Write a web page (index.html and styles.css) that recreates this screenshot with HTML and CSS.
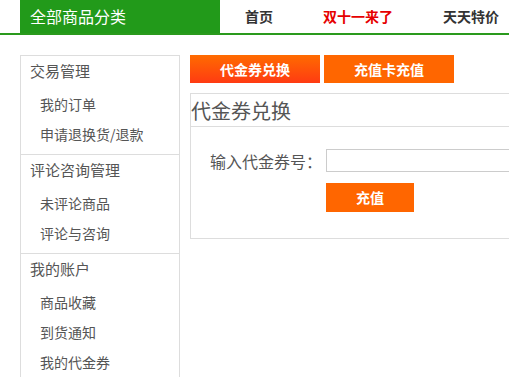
FILE: index.html
```html
<!DOCTYPE html>
<html lang="zh-CN">
<head>
<meta charset="utf-8">
<title>代金券兑换</title>
<link rel="stylesheet" href="styles.css">
</head>
<body>
<div class="header">
  <div class="header-inner">
    <div class="all-cat">全部商品分类</div>
    <ul class="nav">
      <li class="nav-item">首页</li>
      <li class="nav-item hot">双十一来了</li>
      <li class="nav-item">天天特价</li>
    </ul>
  </div>
</div>
<div class="main">
  <div class="sidebar">
    <div class="side-sec">
      <div class="side-title">交易管理</div>
      <ul class="side-list">
        <li>我的订单</li>
        <li>申请退换货/退款</li>
      </ul>
    </div>
    <div class="side-sec">
      <div class="side-title">评论咨询管理</div>
      <ul class="side-list">
        <li>未评论商品</li>
        <li>评论与咨询</li>
      </ul>
    </div>
    <div class="side-sec">
      <div class="side-title">我的账户</div>
      <ul class="side-list">
        <li>商品收藏</li>
        <li>到货通知</li>
        <li>我的代金券</li>
      </ul>
    </div>
  </div>
  <div class="content">
    <div class="tabs">
      <div class="tab tab-active">代金券兑换</div>
      <div class="tab">充值卡充值</div>
    </div>
    <div class="panel">
      <div class="panel-title">代金券兑换</div>
      <div class="form-row input-row">
        <label class="form-label">输入代金券号：</label>
        <input class="form-input" type="text">
      </div>
      <div class="form-row submit-row">
        <div class="btn-submit">充值</div>
      </div>
    </div>
  </div>
</div>
</body>
</html>
```
FILE: styles.css
```css
* { box-sizing: border-box; }
html, body { margin: 0; padding: 0; }
body {
  font-family: "Noto Sans CJK SC", "Microsoft YaHei", sans-serif;
  background: #fff;
  color: #666;
  width: 509px;
  overflow: hidden;
}
ul { list-style: none; margin: 0; padding: 0; }

.header {
  border-bottom: 2px solid #2a9a1d;
  height: 35px;
}
.header-inner {
  display: flex;
  padding-left: 20px;
  height: 33px;
}
.all-cat {
  width: 200px;
  height: 33px;
  background: #229a1a;
  color: #fff;
  font-size: 16px;
  line-height: 33px;
  padding-left: 10px;
  flex-shrink: 0;
}
.nav {
  display: flex;
  white-space: nowrap;
}
.nav-item {
  padding: 0 25px;
  font-size: 14px;
  font-weight: bold;
  color: #333;
  line-height: 33px;
}
.nav-item.hot { color: #e60000; }

.main {
  display: flex;
  align-items: flex-start;
  padding: 20px 0 0 20px;
  gap: 10px;
}
.sidebar {
  width: 160px;
  flex-shrink: 0;
  border: 1px solid #ddd;
  border-bottom: 0;
}
.side-sec {
  border-top: 1px solid #ddd;
  padding-bottom: 5px;
}
.side-sec:first-child { border-top: 0; }
.side-title {
  height: 30px;
  line-height: 30px;
  padding-left: 9px;
  font-size: 15px;
  color: #555;
}
.side-list { margin-top: 3px; }
.side-list li {
  height: 30px;
  line-height: 30px;
  padding-left: 19px;
  font-size: 14px;
  color: #555;
}

.content {
  flex: 1;
  min-width: 0;
}
.tabs {
  display: flex;
  gap: 4px;
}
.tab {
  width: 130px;
  height: 28px;
  line-height: 28px;
  text-align: center;
  background: #ff6600;
  color: #fff;
  font-size: 14px;
  font-weight: bold;
}
.tab-active {
  background: linear-gradient(#ff6b00, #ff3b12);
}
.panel {
  margin-top: 10px;
  border: 1px solid #ddd;
  border-right: 0;
  width: 340px;
  height: 146px;
}
.panel-title {
  height: 33px;
  line-height: 34px;
  font-size: 20px;
  color: #555;
  border-bottom: 1px solid #ddd;
}
.form-row {
  display: flex;
  align-items: center;
}
.input-row { margin-top: 22px; }
.form-label {
  width: 135px;
  text-align: right;
  padding-right: 4px;
  font-size: 16px;
  line-height: 20px;
  color: #555;
}
.form-input {
  width: 200px;
  height: 23px;
  border: 1px solid #ccc;
  margin: 0;
  padding: 0;
  flex-shrink: 0;
}
.submit-row {
  margin-top: 11px;
  padding-left: 135px;
}
.btn-submit {
  width: 88px;
  height: 29px;
  line-height: 29px;
  text-align: center;
  background: #ff6600;
  color: #fff;
  font-size: 14px;
  font-weight: bold;
}
```
